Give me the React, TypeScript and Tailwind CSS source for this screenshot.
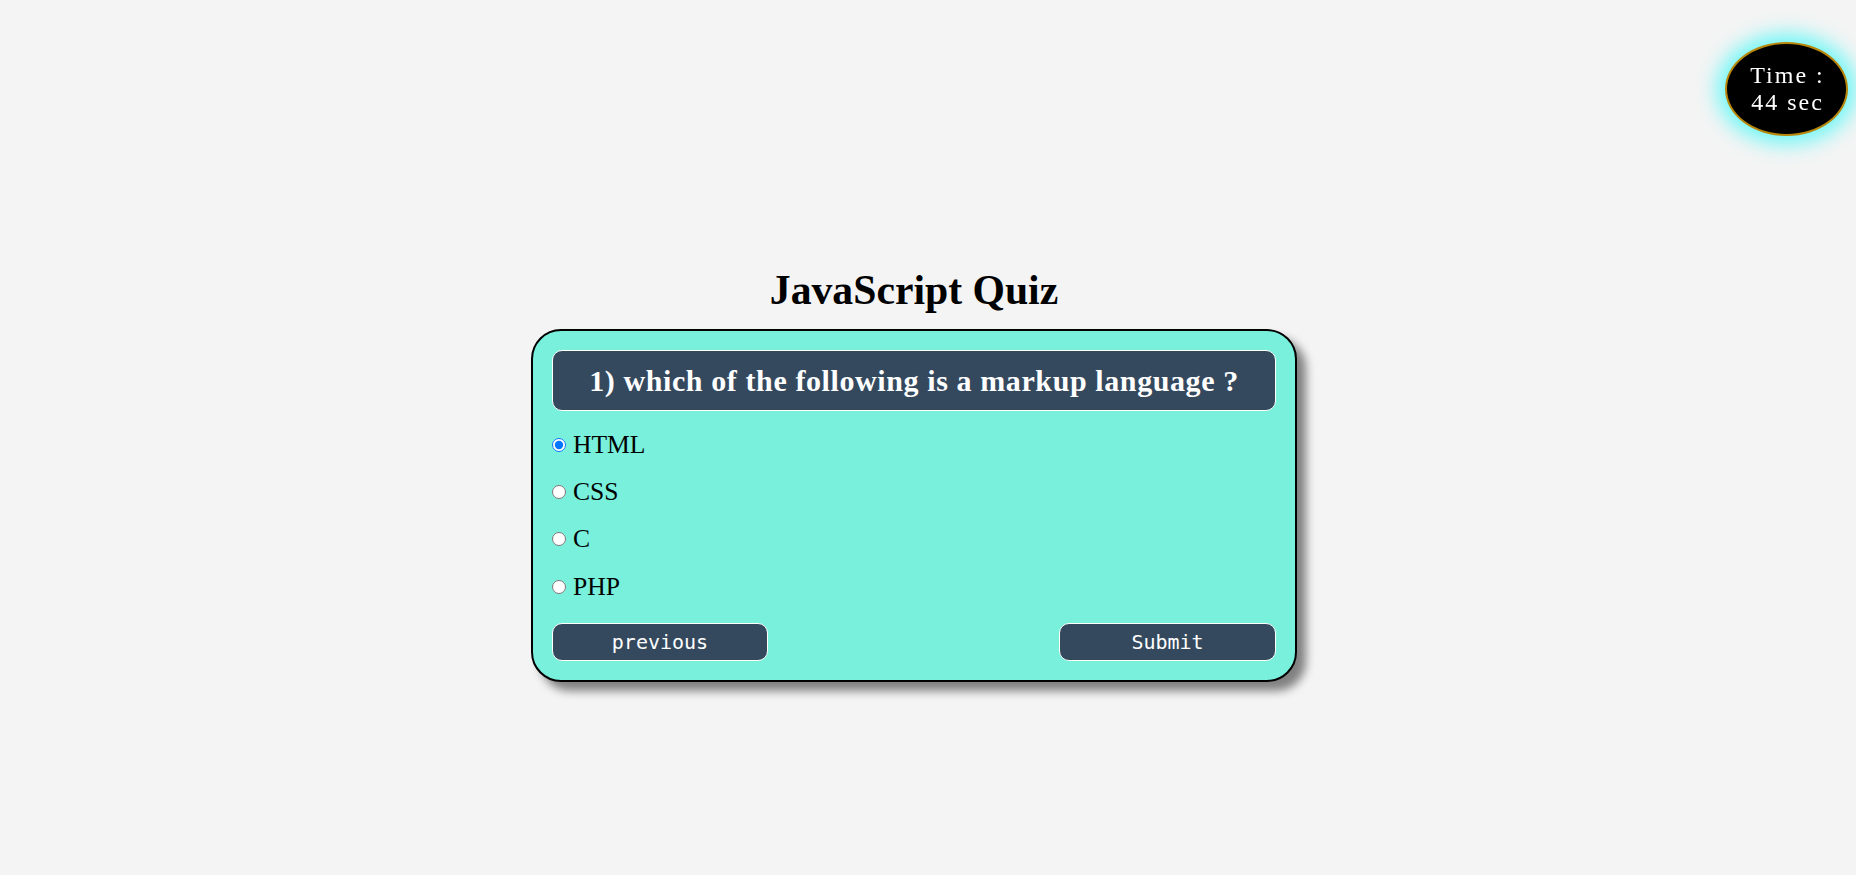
import React from "react";

const options = ["HTML", "CSS", "C", "PHP"];

export default function App() {
  return (
    <div className="min-h-[875px] w-full bg-[#f4f4f4] relative" style={{ fontFamily: '"Liberation Serif", "Times New Roman", serif' }}>
      <div className="fixed top-[42px] right-[8px] w-[123px] h-[94px] rounded-[50%] bg-black border-2 border-[#b8860b] shadow-[0_0_20px_8px_#6ff7f7] flex flex-col items-center justify-center text-white text-[24px] leading-[27px] tracking-[2px]">
        <span className="pl-[2px]">Time :</span>
        <span className="pl-[2px]">44 sec</span>
      </div>

      <div className="flex justify-center pr-[28px] pt-[268px]">
        <div className="flex flex-col items-center">
          <h1 className="text-[41.7px] font-bold leading-[45px] mb-[16px] text-black">JavaScript Quiz</h1>
          <div className="w-[766px] border-2 border-black rounded-[30px] bg-[#78f0dc] p-[19px] shadow-[9px_9px_10px_#808080]">
            <div className="h-[61px] rounded-[10px] border border-white bg-[#34495e] flex items-center justify-center">
              <span className="text-white font-bold text-[30px] leading-[34px] tracking-[0.6px]">1) which of the following is a markup language ?</span>
            </div>
            <div className="mt-[10px] flex flex-col">
              {options.map((o, i) => (
                <label key={o} className="h-[47.4px] flex items-center gap-[7px] text-[25.6px] text-black">
                  <input type="radio" name="q" defaultChecked={i === 0} className="m-0 w-[14px] h-[14px]" />
                  <span>{o}</span>
                </label>
              ))}
            </div>
            <div className="mt-[12px] flex justify-between">
              <button className="w-[216px] h-[38px] rounded-[10px] border border-white bg-[#34495e] text-white text-[20px]" style={{ fontFamily: '"DejaVu Sans Mono", monospace' }}>previous</button>
              <button className="w-[217px] h-[38px] rounded-[10px] border border-white bg-[#34495e] text-white text-[20px]" style={{ fontFamily: '"DejaVu Sans Mono", monospace' }}>Submit</button>
            </div>
          </div>
        </div>
      </div>
    </div>
  );
}
